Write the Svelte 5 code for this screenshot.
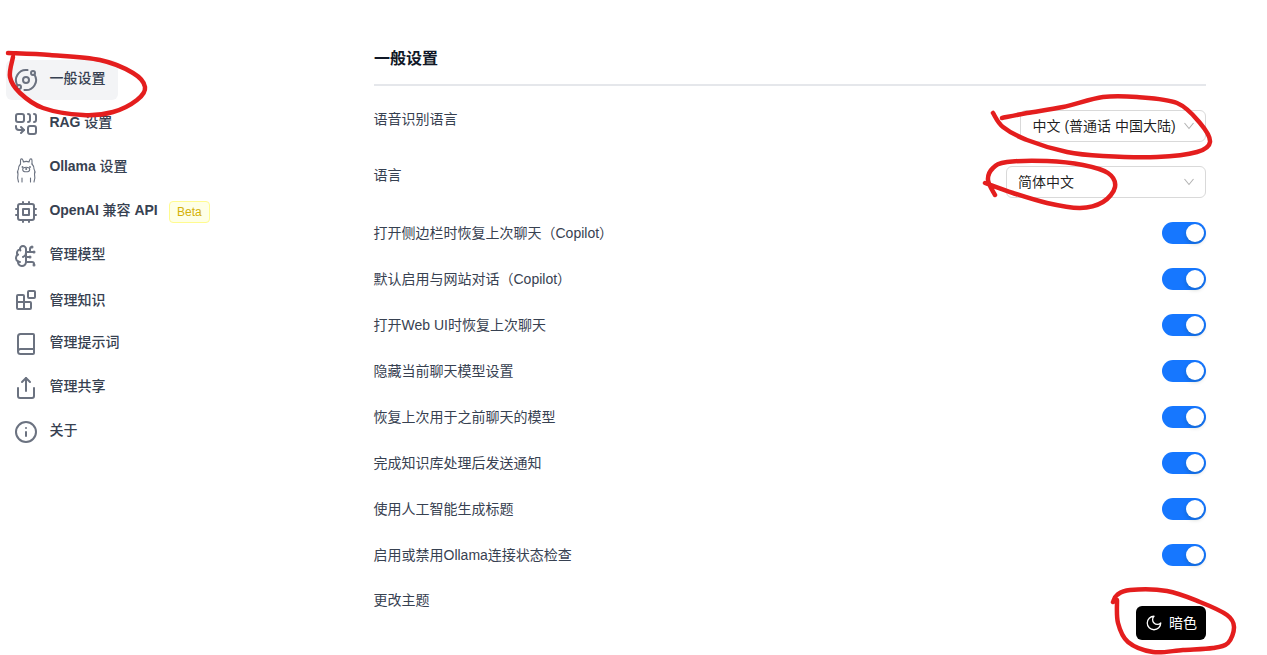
<script>
  const toggles = [
    '打开侧边栏时恢复上次聊天\uFF08Copilot\uFF09',
    '默认启用与网站对话\uFF08Copilot\uFF09',
    '打开Web UI时恢复上次聊天',
    '隐藏当前聊天模型设置',
    '恢复上次用于之前聊天的模型',
    '完成知识库处理后发送通知',
    '使用人工智能生成标题',
    '启用或禁用Ollama连接状态检查'
  ];

  const strokes = [
    [[8,53],[50,55],[100,60],[133,73],[145,87],[137,100],[113,112],[83,115],[43,108],[20,93],[10,77],[13,57]],
    [[993,113],[1003,127],[1027,140],[1067,152],[1103,156],[1157,157],[1197,152],[1210,142],[1200,123],[1177,103],[1137,97],[1103,97],[1063,107],[1027,113],[1002,118]],
    [[985,183],[1013,193],[1047,203],[1080,208],[1103,202],[1115,187],[1108,173],[1083,165],[1047,161],[1007,162],[993,168],[988,180],[995,195]],
    [[1113,602],[1117,595],[1130,590],[1167,591],[1200,602],[1227,615],[1234,627],[1228,643],[1213,648],[1183,650],[1153,652],[1128,642],[1118,623],[1117,600]]
  ];

  function smooth(p) {
    let d = `M${p[0][0]} ${p[0][1]}`;
    for (let i = 0; i < p.length - 1; i++) {
      const a = p[Math.max(i - 1, 0)], b = p[i], c = p[i + 1], e = p[Math.min(i + 2, p.length - 1)];
      d += `C${b[0] + (c[0] - a[0]) / 6} ${b[1] + (c[1] - a[1]) / 6} ${c[0] - (e[0] - b[0]) / 6} ${c[1] - (e[1] - b[1]) / 6} ${c[0]} ${c[1]}`;
    }
    return d;
  }
</script>

<div class="page">
  <nav class="side">
    <a class="item active">
      <svg class="ic" viewBox="0 0 24 24"><circle cx="12" cy="12" r="3"/><circle cx="19" cy="5" r="2"/><circle cx="5" cy="19" r="2"/><path d="M10.4 21.9a10 10 0 0 0 9.941-15.416"/><path d="M13.5 2.1a10 10 0 0 0-9.841 15.416"/></svg>
      <span>一般设置</span>
    </a>
    <a class="item">
      <svg class="ic" viewBox="0 0 24 24"><rect width="8" height="8" x="2" y="2" rx="2"/><path d="M14 2c1.1 0 2 .9 2 2v4c0 1.1-.9 2-2 2"/><path d="M20 2c1.1 0 2 .9 2 2v4c0 1.1-.9 2-2 2"/><path d="M10 18H5c-1.7 0-3-1.3-3-3v-1"/><polyline points="7 21 10 18 7 15"/><rect width="8" height="8" x="14" y="14" rx="2"/></svg>
      <span><b>RAG</b> 设置</span>
    </a>
    <a class="item">
      <svg class="ic thin" viewBox="0 0 24 24"><path d="M6.500 8V4.500C6.500 2.500 8.500 2.200 9 4.500L9.500 6C11 5.300 13.500 5.300 15 6L15.500 4.500C16 2.200 18 2.500 18 4.500V8"/><path d="M6.500 8C5 9.500 4.500 11.500 4.500 13C3.500 14.500 3.300 16.500 4 18C3.500 20 3.500 23 4.500 26"/><path d="M18 8C19.500 9.500 20 11.500 20 13C21 14.500 21.200 16.500 20.500 18C21 20 21 23 20 26"/><ellipse cx="12.200" cy="13.500" rx="3.500" ry="2.300"/><circle cx="12.200" cy="13" r=".5"/><circle cx="8.500" cy="11" r=".4"/><circle cx="16" cy="11" r=".4"/><path d="M8 22v4M16.500 22v4"/></svg>
      <span><b>Ollama</b> 设置</span>
    </a>
    <a class="item">
      <svg class="ic" viewBox="0 0 24 24"><rect x="4" y="4" width="16" height="16" rx="2"/><rect x="9" y="9" width="6" height="6"/><path d="M15 2v2M15 20v2M2 15h2M2 9h2M20 15h2M20 9h2M9 2v2M9 20v2"/></svg>
      <span><b>OpenAI</b> 兼容 <b>API</b></span>
      <em class="beta">Beta</em>
    </a>
    <a class="item">
      <svg class="ic" viewBox="0 0 24 24"><path d="M12 5a3 3 0 1 0-5.997.125 4 4 0 0 0-2.526 5.770 4 4 0 0 0 .556 6.588A4 4 0 1 0 12 18Z"/><path d="M9 13a4.500 4.500 0 0 0 3-4"/><path d="M6.003 5.125A3 3 0 0 0 6.401 6.500"/><path d="M3.477 10.896a4 4 0 0 1 .585-.396"/><path d="M6 18a4 4 0 0 1-1.967-.516"/><path d="M12 13h4"/><path d="M12 18h6a2 2 0 0 1 2 2v1"/><path d="M12 8h8"/><path d="M16 8V5a2 2 0 0 1 2-2"/><circle cx="16" cy="13" r=".5"/><circle cx="18" cy="3" r=".5"/><circle cx="20" cy="21" r=".5"/><circle cx="20" cy="8" r=".5"/></svg>
      <span>管理模型</span>
    </a>
    <a class="item low">
      <svg class="ic" viewBox="0 0 24 24"><rect width="7" height="7" x="14" y="3" rx="1"/><path d="M10 21V8a1 1 0 0 0-1-1H4a1 1 0 0 0-1 1v12a1 1 0 0 0 1 1h12a1 1 0 0 0 1-1v-5a1 1 0 0 0-1-1H3"/></svg>
      <span>管理知识</span>
    </a>
    <a class="item">
      <svg class="ic" viewBox="0 0 24 24"><path d="M4 19.500v-15A2.500 2.500 0 0 1 6.500 2H19a1 1 0 0 1 1 1v18a1 1 0 0 1-1 1H6.500a1 1 0 0 1 0-5H20"/></svg>
      <span>管理提示词</span>
    </a>
    <a class="item">
      <svg class="ic" viewBox="0 0 24 24"><path d="M4 12v8a2 2 0 0 0 2 2h12a2 2 0 0 0 2-2v-8"/><polyline points="16 6 12 2 8 6"/><line x1="12" x2="12" y1="2" y2="15"/></svg>
      <span>管理共享</span>
    </a>
    <a class="item">
      <svg class="ic" viewBox="0 0 24 24"><circle cx="12" cy="12" r="10"/><path d="M12 16v-4"/><path d="M12 8h.01"/></svg>
      <span>关于</span>
    </a>
  </nav>

  <main class="main">
    <h2 class="title">一般设置</h2>
    <div class="rows">
      <div class="row">
        <span class="label up">语音识别语言</span>
        <div class="select s1"><span>中文 (普通话 中国大陆)</span><svg class="chev" viewBox="0 0 12 12"><path d="M1.500 3 6 8.500 10.500 3"/></svg></div>
      </div>
      <div class="row">
        <span class="label up">语言</span>
        <div class="select s2"><span>简体中文</span><svg class="chev" viewBox="0 0 12 12"><path d="M1.500 3 6 8.500 10.500 3"/></svg></div>
      </div>
      {#each toggles as t}
        <div class="row">
          <span class="label down">{t}</span>
          <div class="toggle"><i></i></div>
        </div>
      {/each}
      <div class="row">
        <span class="label">更改主题</span>
        <div class="theme">
          <button class="dark">
            <svg viewBox="0 0 24 24"><path d="M12 3a6 6 0 0 0 9 9 9 9 0 1 1-9-9Z"/></svg>
            <span>暗色</span>
          </button>
        </div>
      </div>
    </div>
  </main>

  <svg class="ink" viewBox="0 0 1267 655">
    {#each strokes as s}
      <path d={smooth(s)} />
    {/each}
  </svg>
</div>

<style>
  :global(body) { margin: 0; background: #fff; overflow: hidden; }
  .page {
    position: relative;
    height: 655px;
    display: flex;
    font-family: "Liberation Sans", "Noto Sans CJK SC", sans-serif;
    overflow: hidden;
  }
  .side {
    width: 374px;
    flex: none;
    box-sizing: border-box;
    padding: 60px 0 0 6px;
    display: flex;
    flex-direction: column;
    gap: 4px;
  }
  .item {
    height: 40px;
    display: flex;
    align-items: center;
    gap: 11.5px;
    padding: 0 8px;
    box-sizing: border-box;
    font-size: 14px;
    font-weight: 500;
    color: #374151;
    width: max-content;
    min-width: 112px;
    border-radius: 6px;
  }
  .item span { position: relative; top: -3px; }
  .item.low span { top: -1px; }
  .item b { font-weight: 600; letter-spacing: -0.1px; }
  .item.active { background: #f3f4f6; }
  .ic {
    width: 24px;
    height: 24px;
    flex: none;
    fill: none;
    stroke: #6b7280;
    stroke-width: 2;
    stroke-linecap: round;
    stroke-linejoin: round;
    overflow: visible;
  }
  .ic.thin { stroke-width: 1.1; }
  .beta {
    font-style: normal;
    font-size: 12px;
    font-weight: 400;
    line-height: 20px;
    padding: 0 7px;
    color: #d4b106;
    background: #feffe6;
    border: 1px solid #fffb8f;
    border-radius: 4px;
  }
  .main {
    width: 832px;
    flex: none;
  }
  .title {
    margin: 0;
    padding-top: 49px;
    font-size: 16px;
    line-height: 20px;
    font-weight: 600;
    color: #111827;
    height: 35px;
    border-bottom: 2px solid #e5e7eb;
  }
  .rows {
    padding-top: 24px;
    display: flex;
    flex-direction: column;
    gap: 24px;
  }
  .row {
    display: flex;
    justify-content: space-between;
    align-items: flex-start;
  }
  .label {
    font-size: 14px;
    line-height: 20px;
    color: #374151;
    margin-left: -0.5px;
  }
  .label.up { margin-top: -1px; }
  .label.down { margin-top: 1px; }
  .select {
    box-sizing: border-box;
    height: 32px;
    display: flex;
    align-items: center;
    justify-content: space-between;
    border: 1px solid #d9d9d9;
    border-radius: 6px;
    padding: 0 10px 2px 11px;
    font-size: 14px;
    color: rgba(0, 0, 0, 0.88);
    background: #fff;
  }
  .s1 { width: 186px; padding-left: 11.5px; }
  .s2 { width: 200px; }
  .chev {
    width: 12px;
    height: 12px;
    fill: none;
    stroke: rgba(0, 0, 0, 0.3);
    stroke-width: 1.1;
    flex: none;
    position: relative;
    top: 1px;
  }
  .toggle {
    width: 44px;
    height: 22px;
    border-radius: 11px;
    background: #1677ff;
    position: relative;
  }
  .toggle i {
    position: absolute;
    right: 2px;
    top: 2px;
    width: 18px;
    height: 18px;
    border-radius: 50%;
    background: #fff;
    box-shadow: 0 2px 4px rgba(0, 35, 11, 0.2);
  }
  .theme { padding-top: 16px; }
  .dark {
    display: flex;
    align-items: center;
    gap: 6px;
    height: 34px;
    width: 70px;
    box-sizing: border-box;
    padding: 0 0 2px 9px;
    background: #000;
    color: #fff;
    border: 0;
    border-radius: 6px;
    font: inherit;
    font-size: 14px;
    white-space: nowrap;
  }
  .dark svg {
    width: 18px;
    height: 18px;
    flex: none;
    fill: none;
    stroke: #fff;
    stroke-width: 1.7;
    stroke-linecap: round;
    stroke-linejoin: round;
    position: relative;
    top: 1px;
  }
  .ink {
    position: absolute;
    inset: 0;
    width: 1267px;
    height: 655px;
    pointer-events: none;
    fill: none;
    stroke: #e41e1e;
    stroke-width: 4.5;
    stroke-linecap: round;
    stroke-linejoin: round;
  }
</style>
